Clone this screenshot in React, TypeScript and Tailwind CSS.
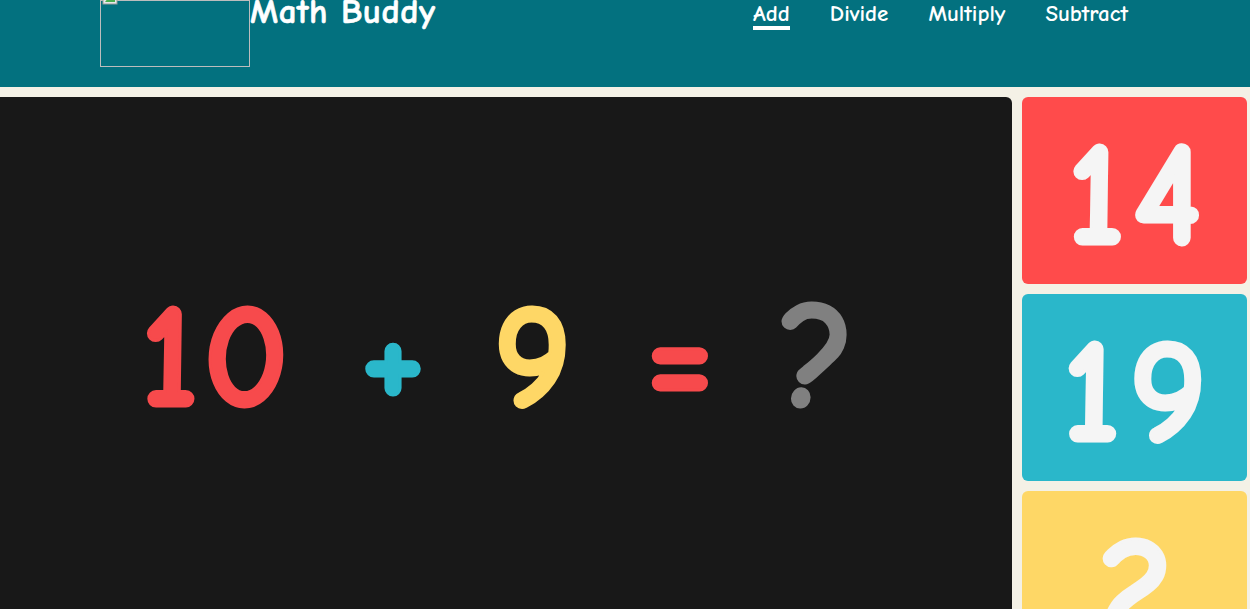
import React from "react";

const font = { fontFamily: '"Comic Sans MS", "Comic Neue", "Open Sans", sans-serif' };

const App: React.FC = () => {
    const links = ["Add", "Divide", "Multiply", "Subtract"];
    const options = [
        { value: "14", bg: "bg-[#ff4b4b]" },
        { value: "19", bg: "bg-[#2ab7ca]" },
        { value: "2", bg: "bg-[#fed766]" },
    ];

    return (
        <div className="min-h-screen bg-[#f4f1e6] overflow-hidden h-[609px]" style={font}>
            {/* Header */}
            <header className="h-[87px] bg-[#03717f] flex items-start pl-[100px] pr-[122px]">
                <div className="relative w-[150px] h-[67px] border border-[#bdbdbd] shrink-0">
                    <svg className="absolute left-[1px] top-[-12px]" width="16" height="16" viewBox="0 0 16 16">
                        <rect x="1" y="1" width="14" height="14" fill="#e8e8e8" stroke="#9a9a9a" />
                        <path d="M3 13 L7 8 L10 11 L13 7 L13 13 Z" fill="#4caf50" />
                    </svg>
                </div>
                <h1 className="text-white font-bold text-[35px] leading-none -mt-[6px] tracking-[0.5px] [-webkit-text-stroke:0.6px_currentColor]">
                    Math Buddy
                </h1>
                <nav className="ml-auto flex gap-10 text-white text-[23px] leading-none font-bold pt-[2px]">
                    {links.map((l, i) => (
                        <a key={l} className="flex flex-col items-stretch">
                            <span>{l}</span>
                            {i === 0 && <span className="mt-[1px] h-[4px] bg-white" />}
                        </a>
                    ))}
                </nav>
            </header>

            {/* Main */}
            <main className="mt-[10px] flex gap-[10px] pr-[3px]">
                <section className="w-[1012px] h-[516px] bg-[#181818] rounded-tr-[6px] flex items-center pt-[5px]">
                    <div className="flex items-center pl-[140px] text-[150px] leading-none font-bold [-webkit-text-stroke:3px_currentColor]">
                        <span className="w-[150px] text-center text-[#f74a4c] tracking-[4px]">10</span>
                        <span className="w-[62px] ml-[70px] text-center text-[#2ab7ca]">+</span>
                        <span className="w-[79px] ml-[71px] text-center text-[#fed766]">9</span>
                        <span className="w-[57px] ml-[73px] text-center text-[#f74a4c]">=</span>
                        <span className="w-[65px] ml-[78px] text-center text-[#808080]">?</span>
                    </div>
                </section>
                <aside className="w-[225px] flex flex-col gap-[10px]">
                    {options.map((o) => (
                        <button
                            key={o.value}
                            className={`${o.bg} h-[187px] rounded-[6px] flex items-center justify-center pt-[10px] pl-[8px] text-[#f5f5f5] text-[150px] leading-none font-bold tracking-[8px] [-webkit-text-stroke:3px_currentColor]`}
                        >
                            {o.value}
                        </button>
                    ))}
                </aside>
            </main>
        </div>
    );
};

export default App;
